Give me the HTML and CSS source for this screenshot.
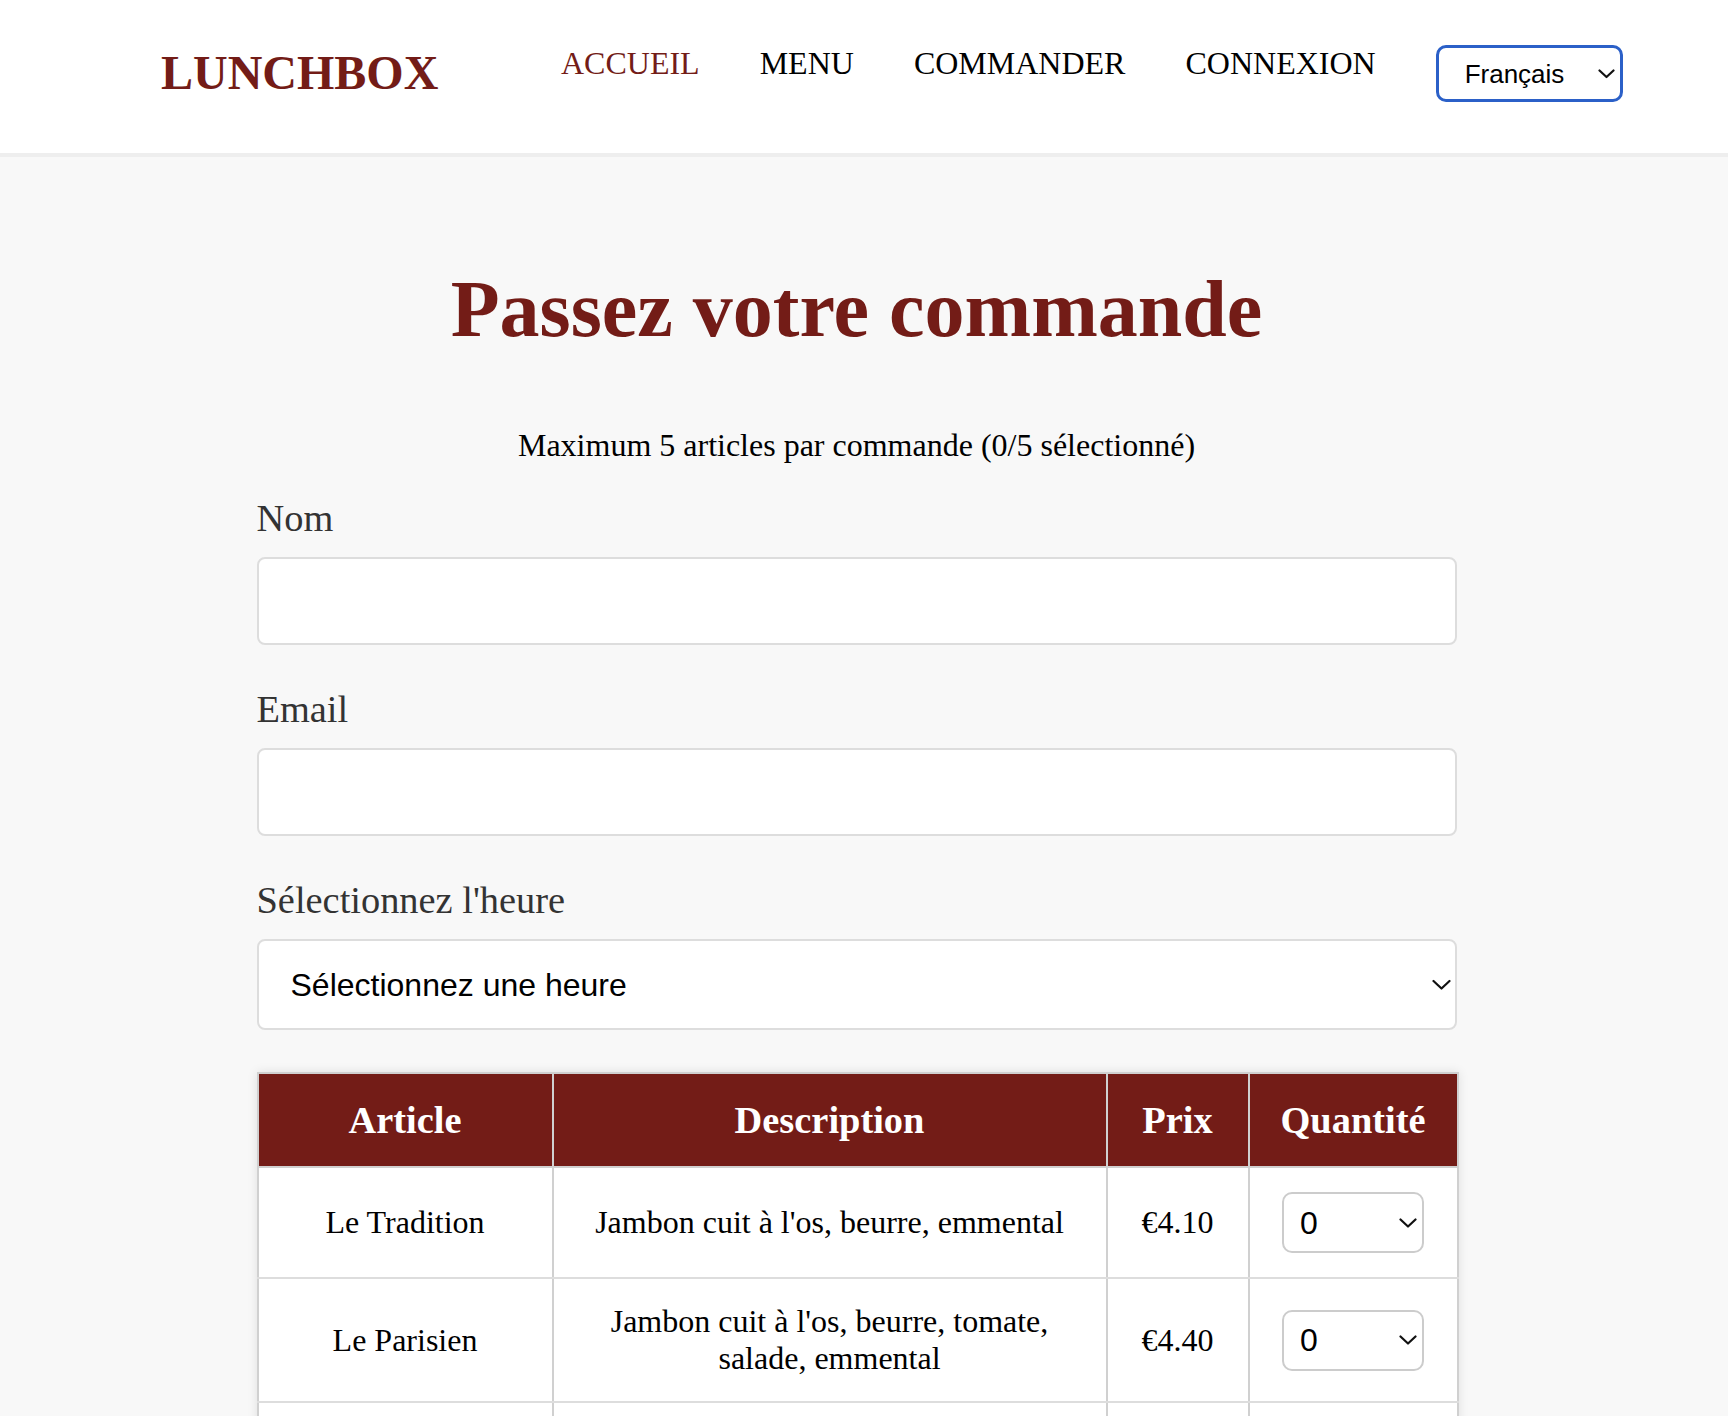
FILE: index.html
```html
<!DOCTYPE html>
<html lang="fr">
<head>
<meta charset="utf-8">
<title>Lunchbox - Commander</title>
<link rel="stylesheet" href="styles.css">
</head>
<body>
<header class="site-header">
  <div class="logo">LUNCHBOX</div>
  <nav class="nav">
    <a class="nav-link active" href="#">ACCUEIL</a>
    <a class="nav-link" href="#">MENU</a>
    <a class="nav-link" href="#">COMMANDER</a>
    <a class="nav-link" href="#">CONNEXION</a>
  </nav>
  <span class="select-wrap lang-wrap">
    <select class="lang-select">
      <option>Français</option>
      <option>English</option>
    </select>
    <svg class="chev chev-lang" width="17" height="10" viewBox="0 0 17 10"><polyline points="1.5,1.5 8.5,8 15.5,1.5" fill="none" stroke="#111" stroke-width="2.2" stroke-linecap="round" stroke-linejoin="round"/></svg>
  </span>
</header>

<div class="main-wrap">
  <main class="container">
    <h1 class="title">Passez votre commande</h1>
    <p class="limit">Maximum 5 articles par commande (0/5 sélectionné)</p>

    <div class="field">
      <label class="field-label">Nom</label>
      <input class="text-input" type="text">
    </div>
    <div class="field">
      <label class="field-label">Email</label>
      <input class="text-input" type="email">
    </div>
    <div class="field">
      <label class="field-label">Sélectionnez l'heure</label>
      <span class="select-wrap block-wrap">
        <select class="time-select">
          <option>Sélectionnez une heure</option>
        </select>
        <svg class="chev chev-time" width="19" height="11" viewBox="0 0 19 11"><polyline points="1.5,1.5 9.5,9 17.5,1.5" fill="none" stroke="#111" stroke-width="2.2" stroke-linecap="round" stroke-linejoin="round"/></svg>
      </span>
    </div>

    <table class="order-table">
      <colgroup>
        <col class="c-article"><col class="c-desc"><col class="c-prix"><col class="c-qte">
      </colgroup>
      <thead>
        <tr><th>Article</th><th>Description</th><th>Prix</th><th>Quantité</th></tr>
      </thead>
      <tbody>
        <tr>
          <td>Le Tradition</td>
          <td>Jambon cuit à l'os, beurre, emmental</td>
          <td>€4.10</td>
          <td><span class="select-wrap qty-wrap"><select class="qty-select"><option>0</option><option>1</option></select><svg class="chev chev-qty" width="18" height="10" viewBox="0 0 18 10"><polyline points="1.5,1.5 9,8.5 16.5,1.5" fill="none" stroke="#111" stroke-width="2.2" stroke-linecap="round" stroke-linejoin="round"/></svg></span></td>
        </tr>
        <tr>
          <td>Le Parisien</td>
          <td>Jambon cuit à l'os, beurre, tomate, salade, emmental</td>
          <td>€4.40</td>
          <td><span class="select-wrap qty-wrap"><select class="qty-select"><option>0</option><option>1</option></select><svg class="chev chev-qty" width="18" height="10" viewBox="0 0 18 10"><polyline points="1.5,1.5 9,8.5 16.5,1.5" fill="none" stroke="#111" stroke-width="2.2" stroke-linecap="round" stroke-linejoin="round"/></svg></span></td>
        </tr>
        <tr>
          <td>Le Végétarien</td>
          <td>Tomate, salade, concombre, emmental</td>
          <td>€4.20</td>
          <td><span class="select-wrap qty-wrap"><select class="qty-select"><option>0</option><option>1</option></select><svg class="chev chev-qty" width="18" height="10" viewBox="0 0 18 10"><polyline points="1.5,1.5 9,8.5 16.5,1.5" fill="none" stroke="#111" stroke-width="2.2" stroke-linecap="round" stroke-linejoin="round"/></svg></span></td>
        </tr>
      </tbody>
    </table>
  </main>
</div>
</body>
</html>
```
FILE: styles.css
```css
* { box-sizing: border-box; }

html, body {
  margin: 0;
  padding: 0;
  background: #f8f8f8;
  font-family: "Liberation Serif", "Times New Roman", serif;
  color: #000;
}

.site-header {
  display: flex;
  align-items: flex-start;
  height: 157px;
  padding: 45px 0 0 161px;
  background: #fff;
  border-bottom: 4px solid #eeeeee;
}

.logo {
  width: 400px;
  font-size: 48px;
  font-weight: bold;
  color: #731c17;
  line-height: normal;
}

.nav {
  display: flex;
  gap: 60px;
}

.nav-link {
  font-size: 32px;
  color: #000;
  text-decoration: none;
  line-height: normal;
}

.nav-link.active { color: #731c17; }

.select-wrap {
  position: relative;
  display: inline-block;
}

.chev {
  position: absolute;
  top: 50%;
  transform: translateY(-50%);
  pointer-events: none;
}

.lang-wrap { margin-left: 60px; }

.lang-select {
  appearance: none;
  -webkit-appearance: none;
  width: 187px;
  height: 57px;
  border: 3px solid #2b60c8;
  border-radius: 10px;
  background: #fff;
  padding: 0 0 0 26px;
  font-family: "Liberation Sans", Arial, sans-serif;
  font-size: 26px;
  color: #000;
  outline: none;
}

.chev-lang { right: 8px; }

.main-wrap {
  padding-right: 15px;
}

.container {
  width: 1200px;
  margin: 0 auto;
  padding-top: 107px;
  padding-bottom: 60px;
}

.title {
  margin: 0;
  text-align: center;
  font-size: 80px;
  font-weight: bold;
  color: #731c17;
  line-height: normal;
}

.limit {
  margin: 72px 0 32px;
  text-align: center;
  font-size: 32px;
  line-height: normal;
}

.field { margin-bottom: 42px; }

.field-label {
  display: block;
  font-size: 38.4px;
  color: #333;
  line-height: normal;
  margin-bottom: 17px;
}

.text-input {
  display: block;
  width: 100%;
  height: 88px;
  border: 2px solid #dddddd;
  border-radius: 8px;
  background: #fff;
  padding: 0 32px;
  font-size: 32px;
  outline: none;
}

.block-wrap { display: block; }

.time-select {
  appearance: none;
  -webkit-appearance: none;
  display: block;
  width: 100%;
  height: 91px;
  border: 2px solid #dddddd;
  border-radius: 8px;
  background: #fff;
  padding: 0 0 0 32px;
  font-family: "Liberation Sans", Arial, sans-serif;
  font-size: 32px;
  color: #000;
  outline: none;
}

.chev-time { right: 6px; }

.order-table {
  width: 1200px;
  table-layout: fixed;
  border-collapse: collapse;
  background: #fff;
  box-shadow: 0 0 10px rgba(0, 0, 0, 0.1);
  border: 2px solid #d0d0d0;
}

.c-article { width: 295px; }
.c-desc { width: 554px; }
.c-prix { width: 142px; }
.c-qte { width: 209px; }

.order-table th,
.order-table td {
  border: 2px solid #d0d0d0;
  padding: 24px;
  text-align: center;
  vertical-align: middle;
  line-height: normal;
}

.order-table th {
  background: #731c17;
  color: #fff;
  font-size: 38.4px;
  font-weight: bold;
}

.order-table td {
  font-size: 32px;
  color: #000;
}

.order-table tbody tr td { border-bottom-color: #dddddd; }

.qty-select {
  appearance: none;
  -webkit-appearance: none;
  width: 142px;
  height: 61px;
  border: 2px solid #cccccc;
  border-radius: 10px;
  background: #fff;
  padding: 0 0 0 16px;
  font-family: "Liberation Sans", Arial, sans-serif;
  font-size: 32px;
  color: #000;
  vertical-align: middle;
  outline: none;
}

.chev-qty { right: 7px; }
```
